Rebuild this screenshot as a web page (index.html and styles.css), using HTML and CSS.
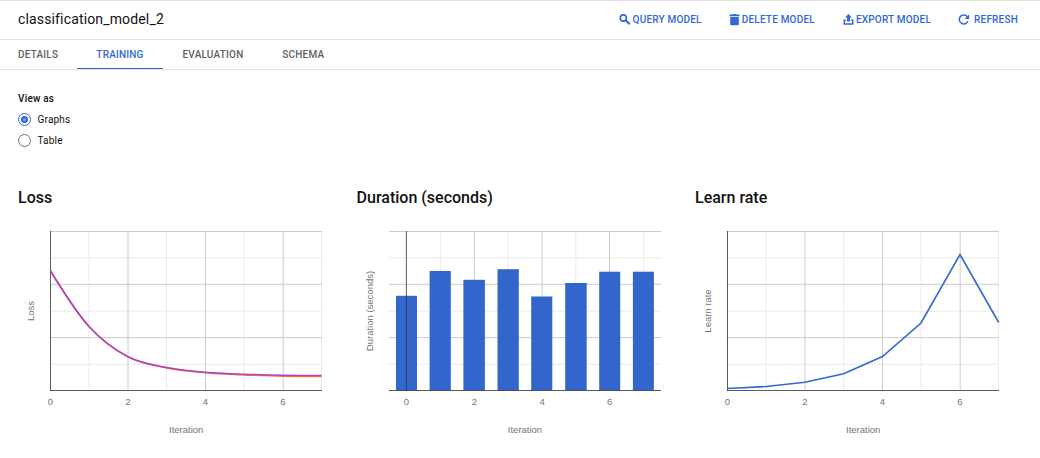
FILE: index.html
```html
<!DOCTYPE html>
<html lang="en">
<head>
<meta charset="utf-8">
<title>classification_model_2</title>
<link rel="stylesheet" href="styles.css">
</head>
<body>
<header class="header">
  <h1 class="title">classification_model_2</h1>
  <div class="actions">
    <button class="action query"><svg class="icon" width="12" height="12" viewBox="0 0 12 12"><circle cx="4.3" cy="4" r="3.1" fill="none" stroke="currentColor" stroke-width="1.6"/><path d="M6.700 6.300l4 3.900" stroke="currentColor" stroke-width="2"/></svg><span>QUERY MODEL</span></button>
    <button class="action delete"><svg class="icon" width="12" height="12" viewBox="0 0 12 12"><path fill="currentColor" d="M.5.600h3L4.200 0h2.600l.700.600h3v1.600H.5zM1.200 3h8.600v7c0 .8-.5 1.300-1.300 1.300h-6c-.8 0-1.300-.5-1.300-1.300z"/></svg><span>DELETE MODEL</span></button>
    <button class="action export"><svg class="icon" width="12" height="12" viewBox="0 0 12 12"><path fill="currentColor" d="M5.500 0L8.900 3.600H7v4H4v-4H2.100zM.5 5.500h2.600v1.200H2v2.600h7V6.700H7.900V5.500h2.600v5.200H.5z"/></svg><span>EXPORT MODEL</span></button>
    <button class="action refresh"><svg class="icon" width="12" height="12" viewBox="0 0 12 12"><path d="M9.300 2.600A4.500 4.500 0 1 0 9.900 7.200" fill="none" stroke="currentColor" stroke-width="1.500"/><path d="M11.100.400v4.500H6.600z" fill="currentColor"/></svg><span>REFRESH</span></button>
  </div>
</header>
<nav class="tabs">
  <a class="tab details">DETAILS</a>
  <a class="tab training active">TRAINING</a>
  <a class="tab evaluation">EVALUATION</a>
  <a class="tab schema">SCHEMA</a>
</nav>
<section class="view">
  <div class="view-label">View as</div>
  <label class="option"><span class="radio checked"></span>Graphs</label>
  <label class="option"><span class="radio"></span>Table</label>
</section>
<main class="charts">
  <section class="chart">
    <h2 class="heading">Loss</h2>
    <svg class="plot" width="320" height="225" viewBox="0 0 320 225">
      <path class="minor" d="M32 37.800H304M32 91.200H304M32 144.300H304M71 11V170M148.600 11V170M226 11V170M303.500 11V170"/>
      <path class="major" d="M32 11.500H304M32 64.300H304M32 117.600H304M110 11V170M187.500 11V170M265.200 11V170"/>
      <path class="axis" d="M32 170.500H304M32.500 11V171"/>
      <path class="line eval" d="M32.500 51C32.500 51 58 92.200 71 106.500S97 130.100 110 136.900S135.700 145.200 148.700 147.900S174.500 151.600 187.500 152.700S213 154.400 226 154.900S252 156 265 156.200S303.500 156.400 303.500 156.400"/>
      <path class="line train" d="M32.500 51C32.500 51 58 92.200 71 106.500S97 129.900 110 136.700S135.700 144.900 148.700 147.500S174.500 151.200 187.500 152.300S213 153.700 226 154.200S252 155.100 265 155.300S303.500 155.500 303.500 155.500"/>
      <g class="labels"><text x="32.500" y="185">0</text><text x="110" y="185">2</text><text x="187.500" y="185">4</text><text x="265" y="185">6</text><text x="168.200" y="213">Iteration</text><text transform="translate(16 91) rotate(-90)">Loss</text></g>
    </svg>
  </section>
  <section class="chart">
    <h2 class="heading duration-heading">Duration (seconds)</h2>
    <svg class="plot" width="320" height="225" viewBox="0 0 320 225">
      <path class="minor" d="M33 37.800H305M33 91.200H305M33 144.300H305M84.400 11V170M152 11V170M219.800 11V170M287.600 11V170"/>
      <path class="major" d="M33 11.500H305M33 64.300H305M33 117.600H305M118.300 11V170M186.200 11V170M253.500 11V170"/>
      <g class="bars"><rect x="40" y="75.800" width="21" height="94.700"/><rect x="73.600" y="51" width="21.200" height="119.500"/><rect x="107.400" y="59.800" width="21.500" height="110.700"/><rect x="141.500" y="49.200" width="21.300" height="121.300"/><rect x="175.200" y="76.500" width="21.100" height="94"/><rect x="209.200" y="63" width="21.500" height="107.500"/><rect x="243.200" y="51.700" width="21" height="118.800"/><rect x="276.900" y="51.700" width="21" height="118.800"/></g>
      <path class="axis" d="M33 170.500H305M50.400 11V171"/>
      <g class="labels"><text x="50.500" y="185">0</text><text x="118.300" y="185">2</text><text x="186.200" y="185">4</text><text x="253.700" y="185">6</text><text x="169" y="213">Iteration</text><text transform="translate(17 91) rotate(-90)">Duration (seconds)</text></g>
    </svg>
  </section>
  <section class="chart">
    <h2 class="heading">Learn rate</h2>
    <svg class="plot" width="320" height="225" viewBox="0 0 320 225">
      <path class="minor" d="M32 37.800H304M32 91.200H304M32 144.300H304M71 11V170M148.600 11V170M226 11V170M303.500 11V170"/>
      <path class="major" d="M32 11.500H304M32 64.300H304M32 117.600H304M110 11V170M187.500 11V170M265.200 11V170"/>
      <path class="axis" d="M32 170.500H304M32.500 11V171"/>
      <path class="line rate" d="M32.500 168.500L71 166.500L110 162.200L148.600 153.800L187.500 136.500L226 103L265 34.500L303.700 102.500"/>
      <g class="labels"><text x="32.500" y="185">0</text><text x="110" y="185">2</text><text x="187.500" y="185">4</text><text x="265" y="185">6</text><text x="168.200" y="213">Iteration</text><text transform="translate(16 91) rotate(-90)">Learn rate</text></g>
    </svg>
  </section>
</main>
</body>
</html>
```
FILE: styles.css
```css
* { box-sizing: border-box; }
body { margin: 0; height: 458px; overflow: hidden; background: #fff; color: #111; font-family: Roboto, "Liberation Sans", sans-serif; }
.header { height: 40px; border-top: 1px solid #e0e0e0; border-bottom: 1px solid #e0e0e0; padding-left: 18px; display: flex; justify-content: space-between; align-items: center; }
.title { margin: 0; padding-bottom: 2px; font-size: 14px; font-weight: 400; letter-spacing: .15px; line-height: 20px; }
.actions { display: flex; padding-right: 22px; gap: 27px; }
.action { display: flex; align-items: center; border: 0; padding: 0; background: none; color: #3367d6; font: 500 10px/16px Roboto, sans-serif; letter-spacing: .2px; white-space: nowrap; gap: 1px; }
.query { gap: 2px; }
.export { margin-left: 1px; }
.refresh { gap: 4px; }
.icon { flex: none; }
.tabs { height: 30px; display: flex; border-bottom: 1px solid #e0e0e0; }
.tab { height: 30px; font-size: 10px; font-weight: 500; line-height: 30px; color: #616161; letter-spacing: .2px; white-space: nowrap; }
.details { padding-left: 18px; width: 77px; }
.training { width: 86px; text-align: center; }
.active { color: #3367d6; border-bottom: 1px solid #3367d6; height: 29px; }
.evaluation { padding-left: 19.5px; width: 119.3px; }
.view { padding: 22px 18px 0; height: 114px; font-size: 10px; }
.view-label { font-weight: 500; line-height: 14px; margin-bottom: 3px; letter-spacing: .2px; }
.option { display: flex; align-items: center; gap: 6.5px; height: 21px; line-height: 20px; letter-spacing: .2px; }
.radio { width: 13px; height: 13px; border: 1px solid #757575; border-radius: 50%; }
.checked { border-color: #3367d6; display: flex; align-items: center; justify-content: center; }
.checked::after { content: ""; box-sizing: border-box; width: 7px; height: 7px; border-radius: 50%; border: 2.5px solid #3367d6; background: #7da0e8; }
.charts { display: grid; grid-template-columns: 338px 339px 1fr; padding-left: 18px; }
.heading { margin: 0; height: 36px; font-size: 16px; font-weight: 500; line-height: 27px; white-space: nowrap; }
.duration-heading { padding-left: .6px; }
.plot { display: block; overflow: visible; }
.minor, .major, .axis, .line { fill: none; }
.minor { stroke: #ebebeb; }
.major { stroke: #ccc; }
.axis { stroke: #333; stroke-opacity: .8; stroke-width: 1; }
.line { stroke-width: 1.6; }
.train { stroke: #ab47bc; }
.eval { stroke: #ff7043; }
.rate { stroke: #3367d6; }
.bars { fill: #3366cc; }
.labels { fill: #757575; font: 9.5px "Liberation Sans", Arial, sans-serif; text-anchor: middle; }
```
